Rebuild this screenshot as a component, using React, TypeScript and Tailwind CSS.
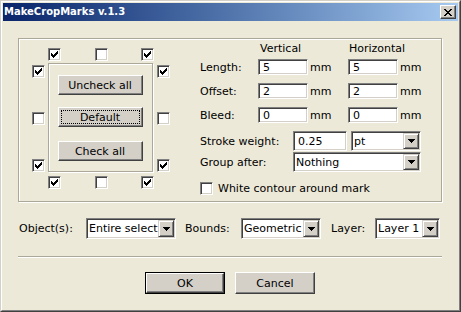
import React from 'react';

const sunken =
  'border border-t-[#808080] border-l-[#808080] border-b-white border-r-white shadow-[inset_1px_1px_0_#404040,inset_-1px_-1px_0_#d4d0c8]';
const raised =
  'border border-t-white border-l-white border-b-[#404040] border-r-[#404040] shadow-[inset_-1px_-1px_0_#808080] bg-[#d4d0c8]';
const etched = 'border border-[#aca899] shadow-[inset_1px_1px_0_white,1px_1px_0_white]';

const CheckMark = () => (
  <svg width="7" height="7" viewBox="0 0 7 7" shapeRendering="crispEdges">
    <path
      d="M6 0h1v3h-1zM5 1h1v3h-1zM4 2h1v3h-1zM3 3h1v3h-1zM2 4h1v3h-1zM1 3h1v3h-1zM0 2h1v3h-1z"
      fill="#000"
    />
  </svg>
);

const Check = ({ checked = false }: { checked?: boolean }) => (
  <div className={`${sunken} bg-white w-[13px] h-[13px] shrink-0 p-[2px] flex`}>
    {checked && <CheckMark />}
  </div>
);

const Field = ({ value, w, h = 16 }: { value: string; w: string; h?: number }) => (
  <div className={`${sunken} bg-white ${w} ${h === 20 ? 'h-[20px]' : 'h-[16px]'} flex items-center pl-[4px] shrink-0`}>
    {value}
  </div>
);

const DropButton = () => (
  <div className="w-[16px] h-full shrink-0 flex items-center justify-center bg-[#d4d0c8] border border-t-[#d4d0c8] border-l-[#d4d0c8] border-b-[#404040] border-r-[#404040] shadow-[inset_1px_1px_0_white,inset_-1px_-1px_0_#808080]">
    <svg width="7" height="4" viewBox="0 0 7 4" shapeRendering="crispEdges">
      <path d="M0 0h7v1h-7zM1 1h5v1h-5zM2 2h3v1h-3zM3 3h1v1h-1z" fill="#000" />
    </svg>
  </div>
);

const Select = ({ value, className }: { value: string; className: string }) => (
  <div className={`${sunken} bg-white ${className} flex p-[1px] shrink-0`}>
    <span className="flex-1 min-w-0 overflow-hidden whitespace-nowrap flex items-center pl-[1px]">{value}</span>
    <DropButton />
  </div>
);

const PushButton = ({ label, focus = false }: { label: string; focus?: boolean }) => (
  <div className={`${raised} w-[85px] h-[20px] flex p-[2px]`}>
    <div
      className={`flex-1 flex items-center justify-center ${focus ? 'border border-dotted border-black' : 'border border-transparent'}`}
    >
      {label}
    </div>
  </div>
);

const DialogButton = ({ label, isDefault = false }: { label: string; isDefault?: boolean }) => (
  <div className={`w-[80px] h-[22px] flex ${isDefault ? 'border border-black' : ''}`}>
    <div className={`${raised} flex-1 flex items-center justify-center`}>{label}</div>
  </div>
);

const MarkRow = ({ values }: { values: boolean[] }) => (
  <div className="ml-[16px] w-[106px] flex justify-between">
    {values.map((v, i) => (
      <Check key={i} checked={v} />
    ))}
  </div>
);

export default function App() {
  return (
    <div className="w-[461px] h-[312px] font-['DejaVu_Sans',sans-serif] text-[11px] leading-none text-black">
      <div className="w-full h-full border border-t-[#d4d0c8] border-l-[#d4d0c8] border-b-[#404040] border-r-[#404040]">
        <div className="w-full h-full border border-t-white border-l-white border-b-[#808080] border-r-[#808080] p-[1px] bg-[#ece9d8] flex flex-col">
          {/* title bar */}
          <div className="h-[18px] shrink-0 flex items-center bg-linear-to-r from-[#0a246a] to-[#a6caf0] pl-[1px] pr-[2px]">
            <span className="flex-1 text-white font-bold text-[10px]">MakeCropMarks v.1.3</span>
            <div className={`${raised} w-[16px] h-[14px] flex items-center justify-center`}>
              <svg width="8" height="7" viewBox="0 0 8 7" shapeRendering="crispEdges">
                <path
                  d="M0 0h2v1h-2zM6 0h2v1h-2zM1 1h2v1h-2zM5 1h2v1h-2zM2 2h4v1h-4zM3 3h2v1h-2zM2 4h4v1h-4zM1 5h2v1h-2zM5 5h2v1h-2zM0 6h2v1h-2zM6 6h2v1h-2z"
                  fill="#000"
                />
              </svg>
            </div>
          </div>

          {/* body */}
          <div className="flex flex-col pl-[15px] pt-[17px]">
            <div className={`${etched} w-[424px] h-[164px] flex items-start shrink-0`}>
              {/* crop mark selector */}
              <div className="ml-[13px] mt-[9px] flex flex-col">
                <MarkRow values={[true, false, true]} />
                <div className="mt-[2px] flex">
                  <div className="h-[109px] pt-[2px] flex flex-col justify-between">
                    <Check checked />
                    <Check />
                    <Check checked />
                  </div>
                  <div className={`${etched} ml-[3px] w-[105px] h-[109px] flex flex-col items-center`}>
                    <div className="mt-[11px] ml-[-1px]">
                      <PushButton label="Uncheck all" />
                    </div>
                    <div className="mt-[12px] ml-[-1px]">
                      <PushButton label="Default" focus />
                    </div>
                    <div className="mt-[14px] ml-[-1px]">
                      <PushButton label="Check all" />
                    </div>
                  </div>
                  <div className="ml-[4px] h-[109px] pt-[2px] flex flex-col justify-between">
                    <Check checked />
                    <Check />
                    <Check checked />
                  </div>
                </div>
                <div className="mt-[4px]">
                  <MarkRow values={[true, false, true]} />
                </div>
              </div>

              {/* settings */}
              <div className="ml-[30px] mt-[1px] flex flex-col">
                <div className="h-[16px] flex items-center pl-[60px]">
                  <span className="w-[89px]">Vertical</span>
                  <span>Horizontal</span>
                </div>
                <div className="mt-[3px] flex flex-col gap-[8px]">
                  {[
                    ['Length:', '5', '5'],
                    ['Offset:', '2', '2'],
                    ['Bleed:', '0', '0'],
                  ].map(([label, v, h]) => (
                    <div key={label} className="h-[16px] flex items-center">
                      <span className="w-[58px]">{label}</span>
                      <Field value={v} w="w-[50px]" />
                      <span className="w-[40px] pl-[2px]">mm</span>
                      <Field value={h} w="w-[50px]" />
                      <span className="pl-[2px]">mm</span>
                    </div>
                  ))}
                </div>
                <div className="mt-[8px] h-[20px] flex items-center">
                  <span className="w-[93px]">Stroke weight:</span>
                  <Field value="0.25" w="w-[54px]" h={20} />
                  <Select value="pt" className="ml-[4px] w-[70px] h-[20px]" />
                </div>
                <div className="mt-[1px] h-[20px] flex items-center">
                  <span className="w-[93px]">Group after:</span>
                  <Select value="Nothing" className="w-[128px] h-[20px]" />
                </div>
                <div className="mt-[10px] flex items-center">
                  <Check />
                  <span className="ml-[5px]">White contour around mark</span>
                </div>
              </div>
            </div>

            {/* object / bounds / layer */}
            <div className="mt-[16px] h-[21px] flex items-center">
              <span className="w-[68px] pl-[1px]">Object(s):</span>
              <Select value="Entire select" className="w-[90px] h-[21px]" />
              <span className="w-[65px] pl-[9px]">Bounds:</span>
              <Select value="Geometric" className="w-[80px] h-[21px]" />
              <span className="w-[54px] pl-[10px]">Layer:</span>
              <Select value="Layer 1" className="w-[65px] h-[21px]" />
            </div>

            <div className="mt-[17px] w-[424px] h-[1px] bg-[#aca899] shadow-[0_1px_0_white]" />

            <div className="mt-[15px] w-[424px] flex justify-center gap-[10px]">
              <DialogButton label="OK" isDefault />
              <DialogButton label="Cancel" />
            </div>
          </div>
        </div>
      </div>
    </div>
  );
}
